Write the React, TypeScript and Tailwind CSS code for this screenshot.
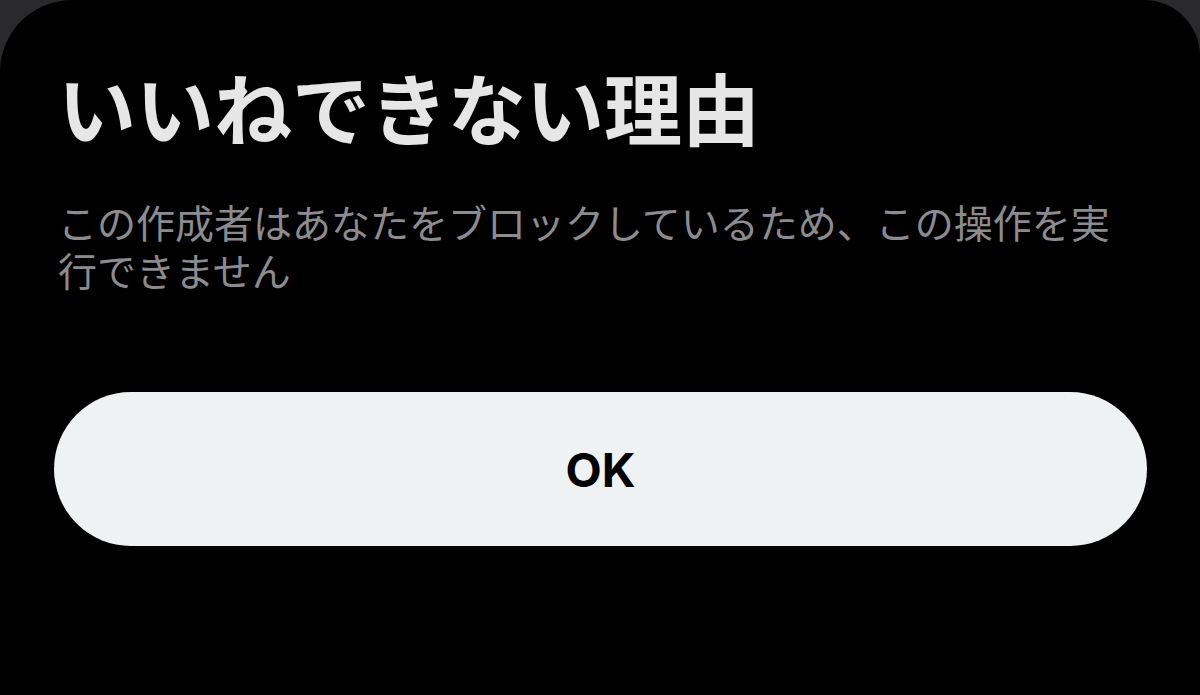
import React from "react";

export default function App() {
  return (
    <div className="w-[1200px] h-[695px] overflow-hidden bg-[#2a2a2d]">
      <div
        className="w-[1200px] h-[695px] bg-black rounded-tl-[72px] rounded-tr-[56px] pt-[66px] pl-[54px]"
        style={{ fontFamily: '"Noto Sans CJK JP", "Noto Sans", sans-serif' }}
      >
        <div className="pl-[4px]">
          <h1 className="text-[78px] leading-[80px] font-bold text-[#e6e6e6]">
            いいねできない理由
          </h1>
          <p className="mt-[51px] text-[39px] leading-[48px] text-[#8c8c90] w-[1080px]">
            この作成者はあなたをブロックしているため、この操作を実行できません
          </p>
        </div>
        <button className="mt-[99px] w-[1093px] h-[154px] rounded-[77px] bg-[#eff2f3] flex items-center justify-center">
          <span
            className="text-[47px] font-bold text-black leading-none"
            style={{ fontFamily: 'Inter, "Noto Sans", sans-serif' }}
          >
            OK
          </span>
        </button>
      </div>
    </div>
  );
}
